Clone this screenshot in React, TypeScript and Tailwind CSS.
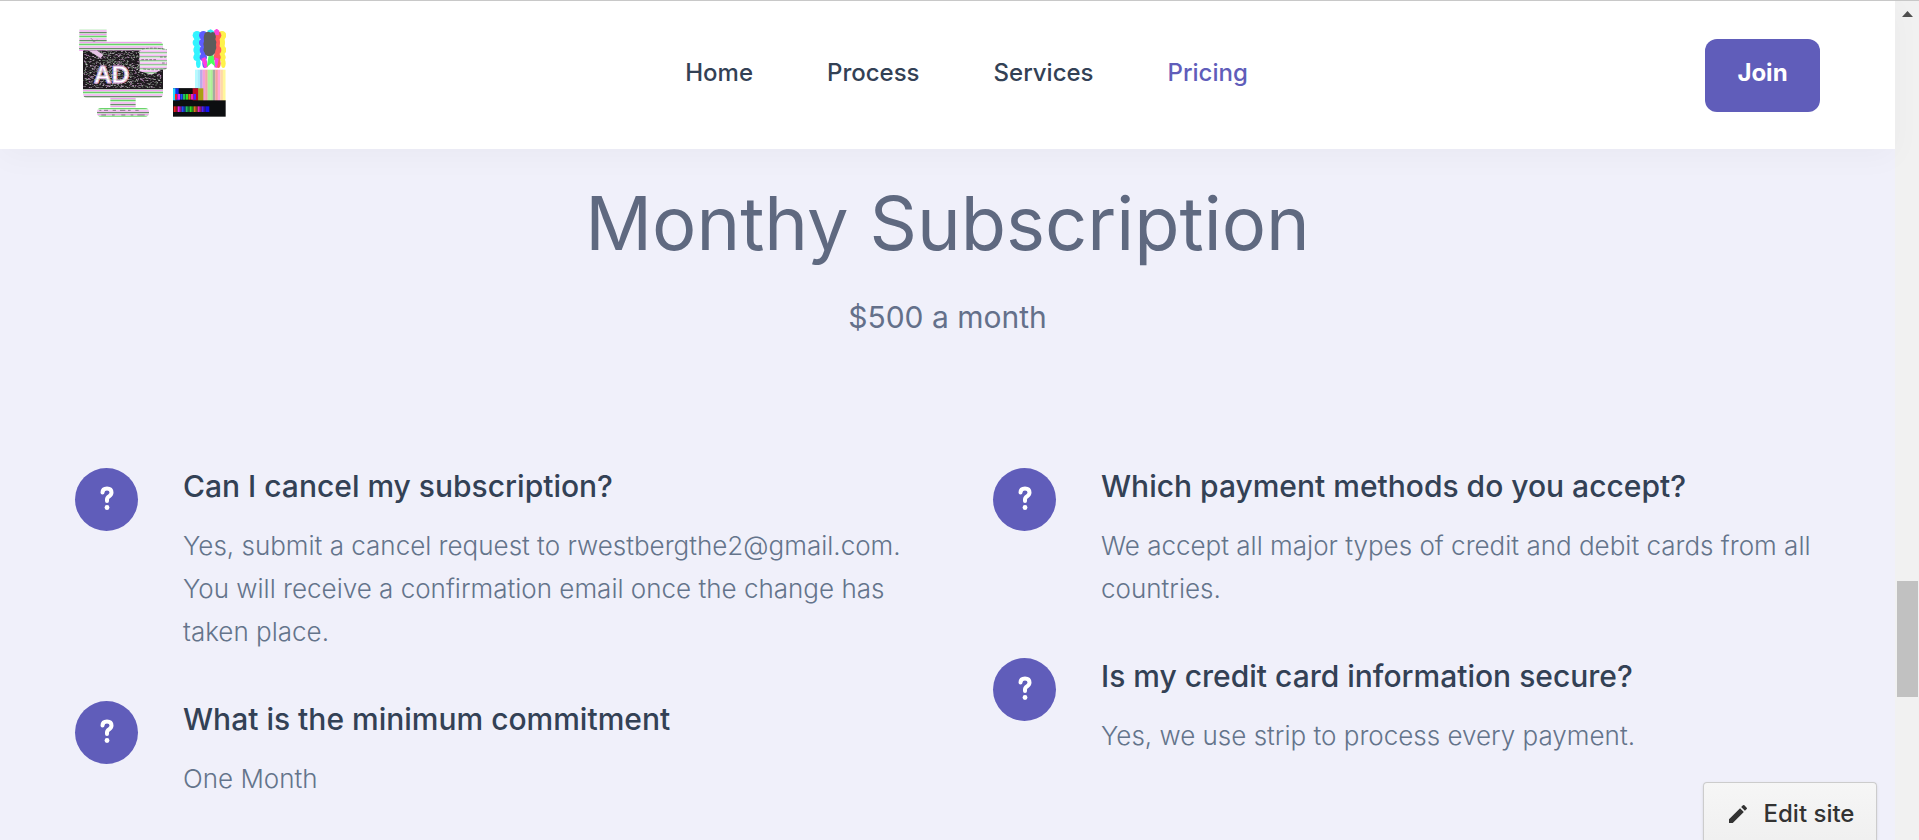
import { MdEdit } from "react-icons/md";

const links = [
  { label: "Home", active: false },
  { label: "Process", active: false },
  { label: "Services", active: false },
  { label: "Pricing", active: true },
];

const columns = [
  [
    {
      question: "Can I cancel my subscription?",
      answer:
        "Yes, submit a cancel request to rwestbergthe2@gmail.com. You will receive a confirmation email once the change has taken place.",
    },
    { question: "What is the minimum commitment", answer: "One Month" },
  ],
  [
    {
      question: "Which payment methods do you accept?",
      answer:
        "We accept all major types of credit and debit cards from all countries.",
    },
    {
      question: "Is my credit card information secure?",
      answer: "Yes, we use strip to process every payment.",
    },
  ],
];

// static grain on the monitor, always the same pattern
const grain = Array.from({ length: 1300 }, (_, i) => {
  const n = Math.sin(i * 12.9898) * 43758.5453;
  const m = Math.sin(i * 78.233) * 12543.123;
  return {
    x: 70 + (n - Math.floor(n)) * 232,
    y: 121 + Math.floor((m - Math.floor(m)) * 38) * 3,
    w: 2 + (i % 4),
    fill: ["#d8d8d8", "#8a8a8a", "#c58fc5", "#555555", "#7a9a7a"][i % 5],
  };
});

const smoke = [
  { x: 409, fill: "#33f4ff" },
  { x: 484, fill: "#fff24a" },
  { x: 469, fill: "#ff5a5a" },
  { x: 428, fill: "#5c5cff" },
];

const beams = [
  "#b5fbff", "#a9ecfa", "#b8a8ea", "#f5a0d8", "#f0a8a8", "#b4f09c",
  "#acf094", "#a8a8a0", "#f5a0a0", "#ffa8d8", "#ffd8a8", "#fff79a",
];

const bars = ["#f02020", "#f020f0", "#2050ff", "#20c060", "#30e020", "#e07020", "#f020c0", "#5020ff"];

function Logo() {
  return (
    <svg viewBox="57 57 441 264" className="h-[88px] w-[147px]" role="img" aria-label="AD">
      <defs>
        <pattern id="scan" width="12" height="12" patternUnits="userSpaceOnUse" y="1">
          <rect width="12" height="12" fill="#fff" />
          <rect width="12" height="4" y="1" fill="#ee9cee" />
          <rect width="12" height="3" y="6" fill="#6cc46c" />
        </pattern>
        <pattern id="scanWide" width="24" height="24" patternUnits="userSpaceOnUse">
          <rect width="24" height="24" fill="#fff" />
          <rect width="24" height="4" y="0" fill="#f0a0f0" />
          <rect width="24" height="5" y="5" fill="#6ad46a" />
          <rect width="24" height="4" y="13" fill="#eca0ec" />
          <rect width="24" height="4" y="18" fill="#6b8f6b" />
        </pattern>
        <clipPath id="screen">
          <path d="M69 121h240v117H69z" />
        </clipPath>
      </defs>

      <rect x="58" y="58" width="82" height="64" fill="url(#scanWide)" />
      <path d="M92 84l12 12M98 96l14-6" stroke="#777" strokeWidth="2" />
      <path d="M69 95h230q10 0 10 12v15H58V101q0-6 11-6z" fill="url(#scanWide)" />
      <path d="M69 236h240v14q0 14-12 14H81q-12 0-12-14z" fill="url(#scanWide)" />
      <rect x="151" y="264" width="76" height="28" fill="url(#scanWide)" />
      <rect x="111" y="294" width="156" height="26" rx="12" fill="url(#scanWide)" />
      <path
        d="M118 301h6m8 0h12m14 0h10m12 0h16m8 0h8m14 0h10M124 315h14m18 0h8m20 0h12m16 0h8m12 0h22"
        stroke="#555"
        strokeWidth="2"
      />

      <g clipPath="url(#screen)">
        <rect x="69" y="121" width="240" height="117" fill="#1f1a1f" />
        {grain.map((g, i) => (
          <rect key={i} x={g.x} y={g.y} width={g.w} height="2" fill={g.fill} />
        ))}
        <path d="M84 121l38 24 8-10-20-14z" fill="#e7c4e7" />
        <path d="M238 121h71v56l-34 17-36-10z" fill="url(#scan)" />
        <text
          x="101"
          y="219"
          className="font-['Liberation_Sans'] text-[74px] font-bold"
          fill="#fff"
          stroke="#d9a8d9"
          strokeWidth="3"
        >
          AD
        </text>
        <path d="M103 184h98M103 196h98M103 208h98" stroke="#8fd08f" strokeWidth="2" opacity=".5" />
      </g>
      <path d="M246 116q38-8 75 2v58q-36 7-81 1v-50z" fill="url(#scan)" />
      <path
        d="M246 117q38-6 74 2M244 149h48m8-8h18m-12 18h14M250 177q36 5 68-1"
        stroke="#555"
        strokeWidth="2"
        strokeDasharray="8 4"
        fill="none"
      />

      {smoke.map((s) => (
        <g key={s.fill} fill={s.fill}>
          <rect x={s.x - 6} y="72" width="16" height="76" />
          <circle cx={s.x + 2} cy="76" r="13" />
          <circle cx={s.x} cy="98" r="11" />
          <circle cx={s.x + 3} cy="120" r="12" />
          <circle cx={s.x + 2} cy="142" r="11" />
          <ellipse cx={s.x + 6} cy="160" rx="7" ry="14" />
        </g>
      ))}
      <path d="M424 146l12-5 8 30-10 4zM464 142l12 4-5 28-8-2z" fill="#ff3ce0" />
      <path d="M446 136h14l6 34-12-10-14 12z" fill="#4cff60" />
      <path d="M442 62l10-4 10 6-3 10-14-2z" fill="#28e8f8" />
      <path d="M462 62l8-6 8 6-2 14-12-2z" fill="#ff46dc" />
      <path
        d="M434 70q8-8 18-2 12-6 14 6 4 8 0 14 5 8 2 16 3 12-2 18 0 12-13 16-17 2-19-10-6-6-2-16-4-10 0-18-3-12 2-24z"
        fill="#5c5c5c"
      />

      {beams.map((fill, i) => (
        <rect key={i} x={405 + i * 7.6} y="179" width="8" height="94" fill={fill} />
      ))}

      <rect x="339" y="235" width="76" height="38" fill="#0c0e10" />
      <rect x="339" y="235" width="20" height="38" fill="#1030f0" />
      <rect x="339" y="235" width="7" height="38" fill="#28d8f8" />
      <rect x="356" y="235" width="42" height="16" fill="#0c0e10" />
      <rect x="398" y="235" width="17" height="38" fill="#c00820" />
      <rect x="415" y="235" width="15" height="38" fill="#a8a010" />
      <rect x="339" y="271" width="158" height="49" fill="#0c0e10" />
      {bars.map((fill, i) => (
        <g key={fill} fill={fill}>
          <rect x={345 + i * 8} y="252" width="7" height="17" />
          <rect x={341 + i * 12} y="289" width="6" height="17" />
          <rect x={347 + i * 12} y="289" width="6" height="17" opacity=".55" />
        </g>
      ))}
      <rect x="437" y="289" width="11" height="17" fill="#1010f0" />
    </svg>
  );
}

function Navbar() {
  return (
    <header className="relative flex h-[149px] items-center justify-between border-t border-[#c8c8c8] bg-white px-[75px] shadow-[0_8px_30px_rgba(0,0,0,0.03)]">
      <a href="#home" className="w-[153px] pb-1 pl-1">
        <Logo />
      </a>
      <nav className="flex gap-[74px] pb-1">
        {links.map((link) => (
          <a
            key={link.label}
            href={"#" + link.label.toLowerCase()}
            className={
              link.active
                ? "text-2xl font-medium text-[#605dba]"
                : "text-2xl font-medium text-[#334155]"
            }
          >
            {link.label}
          </a>
        ))}
      </nav>
      <button className="h-[73px] w-[115px] rounded-xl bg-[#605dba] pb-1 text-2xl font-bold text-white">
        Join
      </button>
    </header>
  );
}

interface FaqProps {
  question: string;
  answer: string;
}

function Faq({ question, answer }: FaqProps) {
  return (
    <div className="flex gap-[45px]">
      <span className="flex h-[63px] w-[63px] shrink-0 items-center justify-center rounded-full bg-[#605dba] pb-1">
        <svg viewBox="0 0 14 24" className="h-6 w-[14px]" fill="none">
          <path
            d="M2.500 6.500Q2.500 2.500 7 2.500q4.500 0 4.500 4 0 2.200-2.300 3.700Q7 11.500 7 13.500v1.500"
            stroke="white"
            strokeWidth="4"
            strokeLinecap="round"
            strokeLinejoin="round"
          />
          <circle cx="7" cy="21.500" r="2.400" fill="white" />
        </svg>
      </span>
      <div>
        <h3 className="text-[30px] leading-9 font-medium text-[#334155]">{question}</h3>
        <p className="mt-5 text-[26px] leading-[43px] font-light text-[#64748b]">{answer}</p>
      </div>
    </div>
  );
}

export default function App() {
  return (
    <div className="flex h-screen overflow-hidden bg-[#f0f0fa] font-['Inter',sans-serif]">
      <div className="relative min-w-0 flex-1">
        <Navbar />
        <main className="px-[75px] pt-[30px]">
          <h1 className="text-center text-[74px] leading-[88px] font-normal text-[#5f6980]">
            Monthy Subscription
          </h1>
          <p className="mt-[30px] text-center text-[30px] leading-10 font-normal text-[#64708a]">
            $500 a month
          </p>
          <div className="mt-[131px] grid grid-cols-2 gap-x-[91px]">
            {columns.map((items, i) => (
              <div key={i} className="flex flex-col gap-12">
                {items.map((item) => (
                  <Faq key={item.question} {...item} />
                ))}
              </div>
            ))}
          </div>
        </main>
        <button className="absolute right-[18px] bottom-0 flex h-[58px] w-[174px] items-center justify-center gap-[14px] rounded-t-[4px] border border-b-0 border-[#cccccc] bg-linear-to-b from-[#f6f6f6] to-[#f0f0f0] pt-1 text-2xl font-medium text-[#333333] shadow-sm">
          <MdEdit className="h-6 w-6" />
          Edit site
        </button>
      </div>

      {/* scrollbar */}
      <div className="flex w-6 shrink-0 flex-col items-center border-t border-[#c8c8c8] bg-[#f1f1f1]">
        <svg viewBox="0 0 11 6" className="mt-[10px] h-[6px] w-[11px]" fill="#505050">
          <path d="M5.500 0L11 6H0z" />
        </svg>
        <div className="grow-[564]" />
        <div className="h-[116px] w-[21px] bg-[#c1c1c1]" />
        <div className="grow-[143]" />
      </div>
    </div>
  );
}
